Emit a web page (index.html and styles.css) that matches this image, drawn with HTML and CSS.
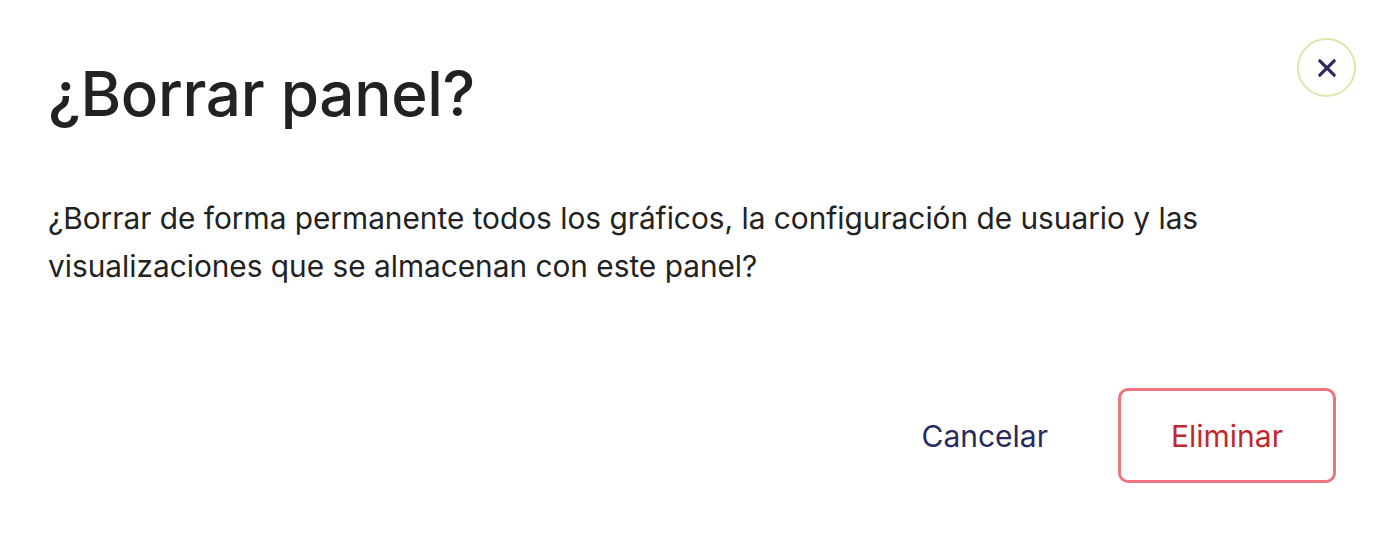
FILE: index.html
```html
<!DOCTYPE html>
<html lang="es">
<head>
<meta charset="utf-8">
<link rel="stylesheet" href="styles.css">
</head>
<body>
<div class="dialog">
  <button class="close" aria-label="Cerrar">
    <svg width="24" height="24" viewBox="0 0 24 24"><path d="M4.8 4.8L19.2 19.2M19.2 4.8L4.8 19.2" stroke="#2b2a5e" stroke-width="3.2" stroke-linecap="round"/></svg>
  </button>
  <h1 class="title">¿Borrar panel?</h1>
  <p class="message">¿Borrar de forma permanente todos los gráficos, la configuración de usuario y las visualizaciones que se almacenan con este panel?</p>
  <div class="actions">
    <button class="btn-cancel">Cancelar</button>
    <button class="btn-delete">Eliminar</button>
  </div>
</div>
</body>
</html>
```
FILE: styles.css
```css
* { box-sizing: border-box; }
html, body { margin: 0; padding: 0; background: #fff; }
body { font-family: Inter, "Noto Sans", sans-serif; color: #222; }
.dialog { position: relative; width: 1386px; height: 542px; padding: 56px 50px 0 48px; }
.close {
  position: absolute; top: 38px; right: 30px;
  width: 59px; height: 59px; border-radius: 50%;
  border: 2.5px solid #dde6aa; background: #fff;
  display: flex; align-items: center; justify-content: center; padding: 0; cursor: pointer;
}
.title { margin: 0; font-size: 62px; font-weight: 500; line-height: 76px; color: #222; letter-spacing: -0.3px; }
.message { margin: 62px 0 0; font-size: 29.8px; line-height: 48px; color: #222; max-width: 1210px; }
.actions { display: flex; justify-content: flex-end; align-items: center; gap: 70px; margin-top: 98px; }
.btn-cancel { background: none; border: none; font-family: inherit; font-size: 30px; color: #2b2a5e; padding: 0; cursor: pointer; }
.btn-delete {
  width: 218px; height: 95px; border: 3px solid #ee7480; border-radius: 10px; background: #fff;
  font-family: inherit; font-size: 30px; color: #c0282d; cursor: pointer;
}
```
